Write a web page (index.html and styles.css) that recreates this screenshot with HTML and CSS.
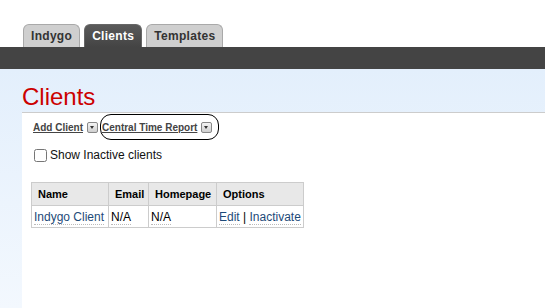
FILE: index.html
```html
<!DOCTYPE html>
<html lang="en">
<head>
  <meta charset="UTF-8" />
  <title>Clients</title>
  <link rel="stylesheet" href="styles.css">
</head>
<body>

  <!-- Top navigation tabs -->
  <div class="tabs">
    <a class="tab" href="#">Indygo</a>
    <a class="tab active" href="#">Clients</a>
    <a class="tab" href="#">Templates</a>
  </div>
  <div class="bar"></div>

  <div class="page">
    <h1>Clients</h1>

    <div class="content">
      <div class="actions">
        <a href="#" class="action">Add Client</a>
        <span class="drop"></span>
        <span class="focus">
          <a href="#" class="action">Central Time Report</a>
          <span class="drop"></span>
        </span>
      </div>

      <label class="inactive"><input type="checkbox"> Show Inactive clients</label>

      <table class="list">
        <tr>
          <th class="c-name">Name</th>
          <th class="c-email">Email</th>
          <th class="c-home">Homepage</th>
          <th class="c-opt">Options</th>
        </tr>
        <tr>
          <td><a href="#">Indygo Client</a></td>
          <td><span class="na">N/A</span></td>
          <td><span class="na">N/A</span></td>
          <td><a href="#">Edit</a> | <a href="#">Inactivate</a></td>
        </tr>
      </table>
    </div>
  </div>

</body>
</html>
```

FILE: styles.css
```css
body {
  margin: 0;
  padding: 0;
  background: #fff;
  font-family: 'Liberation Sans', Arial, sans-serif;
  font-size: 12px;
  color: #000;
}
.tabs {
  display: flex;
  align-items: flex-end;
  gap: 4px;
  height: 47px;
  padding-left: 23px;
}
.tab {
  display: flex;
  align-items: center;
  justify-content: center;
  height: 22px;
  padding: 0 7px;
  background: #cfcfcf;
  border: 1px solid #a9a9a9;
  border-bottom: none;
  border-radius: 6px 6px 0 0;
  color: #333;
  font-weight: bold;
  font-size: 12px;
  letter-spacing: 0.3px;
  text-decoration: none;
}
.tab.active {
  background: linear-gradient(#5a5a5a, #444);
  border-color: #666;
  color: #fff;
}
.bar {
  height: 22px;
  background: #444;
}
.page {
  background: linear-gradient(#e3effc, #f3f8fe);
  padding-left: 22px;
  min-height: 239px;
}
h1 {
  margin: 0;
  height: 43px;
  padding-top: 14px;
  box-sizing: border-box;
  font-weight: normal;
  font-size: 24px;
  line-height: 28px;
  color: #c00;
}
.content {
  background: #fff;
  border-top: 1px solid #ccc;
  padding: 1px 0 0 9px;
  min-height: 195px;
}
.actions {
  display: flex;
  align-items: center;
  height: 26px;
  padding-left: 2px;
}
.action {
  font-size: 10px;
  font-weight: bold;
  color: #444;
}
.drop {
  width: 9px;
  height: 9px;
  margin-left: 4px;
  border: 1px solid #888;
  border-radius: 2px;
  background: linear-gradient(#f4f4f4, #cfcfcf);
  position: relative;
}
.drop::after {
  content: "";
  position: absolute;
  left: 2px;
  top: 3px;
  border-left: 2.5px solid transparent;
  border-right: 2.5px solid transparent;
  border-top: 3px solid #333;
}
.focus {
  display: flex;
  align-items: center;
  height: 24px;
  margin-left: 2px;
  padding: 0 6px 0 1px;
  border: 1px solid #000;
  border-radius: 11px;
}
.inactive {
  display: flex;
  align-items: center;
  gap: 3px;
  margin: 8px 0 0 3px;
  font-size: 12px;
  color: #111;
}
.inactive input {
  margin: 0;
  width: 13px;
  height: 13px;
}
.list {
  margin-top: 20px;
  border-collapse: collapse;
  border: 1px solid #ccc;
  table-layout: fixed;
  width: 273px;
}
.list th {
  background: #e8e8e8;
  border: 1px solid #ccc;
  height: 22px;
  padding: 0 4px 0 6px;
  text-align: left;
  font-size: 11px;
}
.list td {
  border: 1px solid #ccc;
  height: 21px;
  padding: 0 2px;
  font-size: 12px;
  white-space: nowrap;
}
.c-name { width: 66px; }
.c-email { width: 29px; }
.c-home { width: 57px; }
.c-opt { width: 76px; }
.list a,
.na {
  color: #1d4a78;
  text-decoration: none;
  border-bottom: 1px dotted #bbb;
}
.na {
  color: #000;
}
```
